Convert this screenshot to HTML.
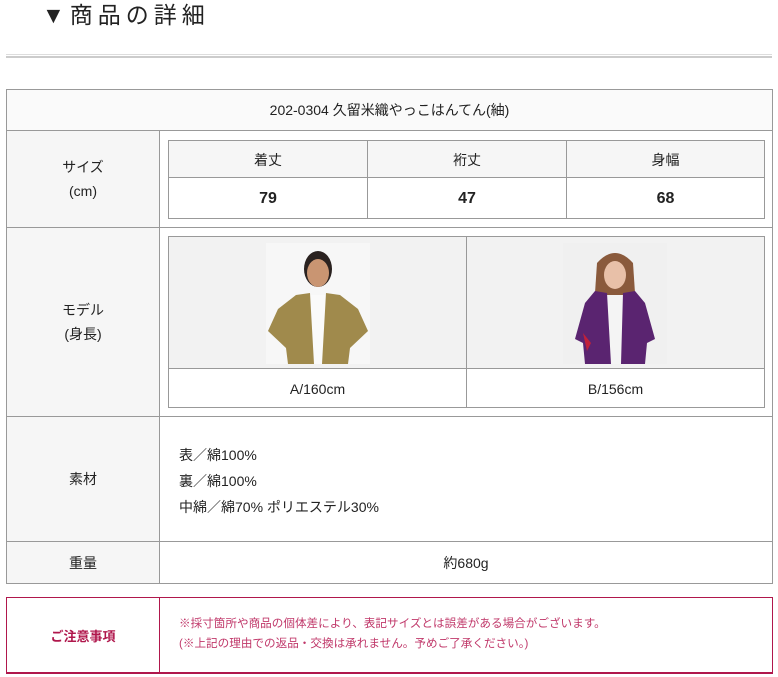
<!DOCTYPE html>
<html><head><meta charset="utf-8"><style>
*{margin:0;padding:0;box-sizing:border-box}
body{width:778px;height:677px;background:#fff;font-family:"Liberation Sans","Noto Sans CJK JP",sans-serif;color:#222;position:relative;overflow:hidden}
.a{position:absolute}
.c{display:flex;align-items:center;justify-content:center;text-align:center}
.lab{background:#f6f6f6;border-right:1px solid #999;font-size:14px;line-height:24px}
</style></head><body>
<div class="a" style="left:42px;top:1px;font-size:23px;letter-spacing:5px;line-height:28px;color:#222">▼商品の詳細</div>
<div class="a" style="left:6px;top:54px;width:766px;height:1px;background:#ddd"></div>
<div class="a" style="left:6px;top:56px;width:766px;height:2px;background:#ccc"></div>

<div class="a" style="left:6px;top:89px;width:767px;height:495px;border:1px solid #999"></div>
<div class="a c" style="left:7px;top:90px;width:765px;height:41px;background:#fafafa;font-size:14px;border-bottom:1px solid #999">202-0304 久留米織やっこはんてん(紬)</div>
<div class="a c lab" style="left:7px;top:131px;width:153px;height:96px">サイズ<br>(cm)</div>
<div class="a" style="left:7px;top:227px;width:765px;height:1px;background:#999"></div>
<div class="a c lab" style="left:7px;top:228px;width:153px;height:188px">モデル<br>(身長)</div>
<div class="a" style="left:7px;top:416px;width:765px;height:1px;background:#999"></div>
<div class="a c lab" style="left:7px;top:417px;width:153px;height:124px">素材</div>
<div class="a" style="left:7px;top:541px;width:765px;height:1px;background:#999"></div>
<div class="a c lab" style="left:7px;top:542px;width:153px;height:41px">重量</div>
<div class="a c" style="left:160px;top:542px;width:612px;height:41px;font-size:14px">約680g</div>

<div class="a" style="left:168px;top:140px;width:597px;height:79px;border:1px solid #999"></div>
<div class="a" style="left:169px;top:141px;width:595px;height:37px;background:#f6f6f6;border-bottom:1px solid #999"></div>
<div class="a" style="left:367px;top:141px;width:1px;height:77px;background:#999"></div>
<div class="a" style="left:566px;top:141px;width:1px;height:77px;background:#999"></div>
<div class="a c" style="left:169px;top:141px;width:198px;height:37px;font-size:14px">着丈</div>
<div class="a c" style="left:368px;top:141px;width:198px;height:37px;font-size:14px">裄丈</div>
<div class="a c" style="left:567px;top:141px;width:197px;height:37px;font-size:14px">身幅</div>
<div class="a c" style="left:169px;top:179px;width:198px;height:39px;font-size:16px;font-weight:bold">79</div>
<div class="a c" style="left:368px;top:179px;width:198px;height:39px;font-size:16px;font-weight:bold">47</div>
<div class="a c" style="left:567px;top:179px;width:197px;height:39px;font-size:16px;font-weight:bold">68</div>

<div class="a" style="left:168px;top:236px;width:597px;height:172px;border:1px solid #999"></div>
<div class="a" style="left:169px;top:237px;width:595px;height:132px;background:#f2f2f2;border-bottom:1px solid #999"></div>
<div class="a" style="left:466px;top:237px;width:1px;height:170px;background:#999"></div>
<svg class="a" style="left:266px;top:243px" width="104" height="121" viewBox="0 0 104 121">
<rect width="104" height="121" fill="#f7f7f7"/>
<ellipse cx="52" cy="26" rx="14" ry="18" fill="#2a2220"/>
<ellipse cx="52" cy="30" rx="11" ry="14" fill="#c99572"/>
<rect x="38" y="52" width="28" height="69" fill="#fafafa"/>
<path d="M30 52 L44 50 L48 121 L22 121 L20 105 L2 88 L12 66 Z" fill="#a08a4c"/>
<path d="M74 52 L60 50 L56 121 L82 121 L84 105 L102 88 L92 66 Z" fill="#a08a4c"/>
</svg>
<svg class="a" style="left:563px;top:243px" width="104" height="121" viewBox="0 0 104 121">
<rect width="104" height="121" fill="#f0f0f0"/>
<path d="M34 20 Q52 0 70 20 L74 80 L30 80 Z" fill="#8a5a3c"/>
<ellipse cx="52" cy="32" rx="11" ry="14" fill="#e8c0a8"/>
<rect x="40" y="52" width="24" height="69" fill="#f4f4f4"/>
<path d="M32 48 L44 50 L48 121 L22 121 L20 100 L12 96 L22 60 Z" fill="#5a2470"/>
<path d="M72 48 L60 50 L58 121 L82 121 L84 100 L92 96 L82 60 Z" fill="#5a2470"/>
<path d="M20 90 L28 100 L24 108 Z" fill="#c0203a"/>
</svg>
<div class="a c" style="left:169px;top:370px;width:297px;height:37px;font-size:14px">A/160cm</div>
<div class="a c" style="left:467px;top:370px;width:297px;height:37px;font-size:14px">B/156cm</div>

<div class="a" style="left:179px;top:442px;font-size:14px;line-height:26px">表／綿100%<br>裏／綿100%<br>中綿／綿70% ポリエステル30%</div>

<div class="a" style="left:6px;top:597px;width:767px;height:77px;border:1px solid #b0174c;border-bottom-width:2px"></div>
<div class="a" style="left:159px;top:598px;width:1px;height:74px;background:#b0174c"></div>
<div class="a c" style="left:7px;top:598px;width:152px;height:74px;font-size:13px;font-weight:bold;color:#b0174c">ご注意事項</div>
<div class="a" style="left:179px;top:614px;font-size:11.6px;line-height:20px;color:#c0386a">※採寸箇所や商品の個体差により、表記サイズとは誤差がある場合がございます。<br>(※上記の理由での返品・交換は承れません。予めご了承ください。)</div>
</body></html>
